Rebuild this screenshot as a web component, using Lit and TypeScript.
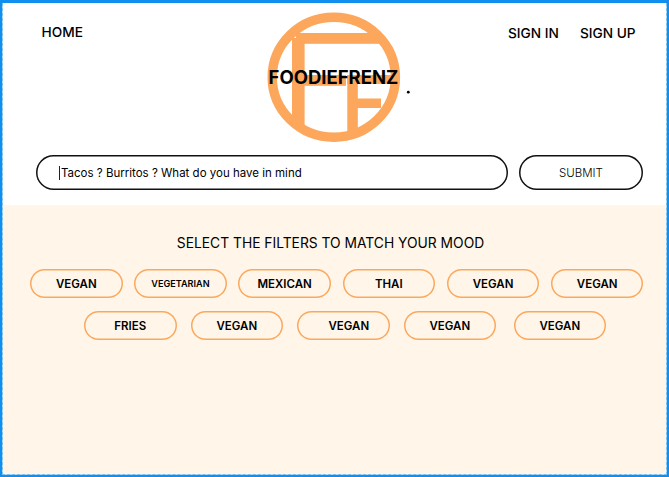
import { LitElement, html, css } from "lit";
import { customElement } from "lit/decorators.js";
import { classMap } from "lit/directives/class-map.js";

interface Filter {
  label: string;
  small?: boolean;
  nudge?: boolean;
}

const FIRST_ROW: Filter[] = [
  { label: "VEGAN" },
  { label: "VEGETARIAN", small: true },
  { label: "MEXICAN" },
  { label: "THAI" },
  { label: "VEGAN" },
  { label: "VEGAN" },
];

const SECOND_ROW: Filter[] = [
  { label: "FRIES" },
  { label: "VEGAN" },
  { label: "VEGAN", nudge: true },
  { label: "VEGAN" },
  { label: "VEGAN" },
];

@customElement("brand-logo")
export class BrandLogo extends LitElement {
  static styles = css`
    :host {
      display: grid;
      width: 160px;
      height: 140px;
      place-items: center;
    }
    .mark,
    .name {
      grid-area: 1 / 1;
    }
    .mark {
      display: block;
    }
    .name {
      font-size: 18.5px;
      font-weight: 700;
      line-height: 22px;
      white-space: nowrap;
      margin: 1px 1px 0 0;
      z-index: 1;
    }
  `;

  render() {
    return html`
      <svg class="mark" width="160" height="140" viewBox="254 6 160 140">
        <g fill="#fca75b">
          <rect x="296" y="33" width="84" height="10.8" />
          <rect x="292" y="38" width="12.6" height="87" />
          <rect x="304" y="75" width="42" height="10.8" />
          <rect x="347.3" y="75" width="10.5" height="62" />
          <rect x="347.3" y="75" width="46" height="9" />
          <rect x="357" y="98.5" width="24" height="9.5" />
        </g>
        <ellipse cx="333.8" cy="77.3" rx="61.6" ry="60" fill="none" stroke="#fca75b" stroke-width="9.4" />
        <circle cx="408.3" cy="92.2" r="1.4" fill="#000" />
      </svg>
      <span class="name">FOODIEFRENZ</span>
    `;
  }
}

@customElement("app-root")
export class AppRoot extends LitElement {
  static styles = css`
    :host {
      display: block;
      height: 477px;
      font-family: Inter, sans-serif;
      color: #000;
    }
    .page {
      box-sizing: border-box;
      height: 477px;
      border: solid #118fee;
      border-width: 3px 2px 2px;
      background: #fff;
      display: flex;
      flex-direction: column;
      overflow: hidden;
    }
    .inner {
      box-sizing: border-box;
      flex: 1;
      display: flex;
      flex-direction: column;
      border: dashed #7cc1f3;
      border-width: 0 1px 1px;
      background: #b5daf4;
    }
    .top {
      box-sizing: border-box;
      height: 202px;
      background: #fff;
    }
    .header {
      display: grid;
      grid-template-columns: 251px 160px 1fr;
      height: 152px;
      align-items: start;
      font-size: 13.7px;
      font-weight: 500;
      line-height: 20px;
    }
    .home {
      margin: 19px 0 0 38.5px;
    }
    .logo {
      margin-top: 3px;
    }
    .account {
      display: flex;
      gap: 21px;
      margin: 20px 0 0 94px;
      white-space: nowrap;
    }
    .search {
      display: flex;
      gap: 11px;
      padding-left: 33px;
    }
    .field,
    .submit {
      box-sizing: border-box;
      height: 35px;
      box-shadow: inset 0 0 0 1.5px #111;
      border-radius: 17.5px;
      display: flex;
      align-items: center;
      font-size: 11.5px;
    }
    .field {
      width: 472px;
      padding-left: 23px;
    }
    .caret {
      width: 1px;
      height: 14px;
      background: #222;
      margin-right: 1px;
    }
    .submit {
      width: 124px;
      justify-content: center;
      font-weight: 300;
    }
    .filters {
      flex: 1;
      background: #fff6e9;
    }
    .title {
      margin: 0;
      padding-top: 28px;
      width: 655px;
      text-align: center;
      font-size: 13.82px;
      font-weight: 400;
      line-height: 20px;
    }
    .row {
      display: flex;
    }
    .first {
      margin: 16px 0 0 27px;
      gap: 11.7px;
    }
    .second {
      margin: 13px 0 0 81px;
      gap: 14px;
    }
    .second .chip:last-child {
      margin-left: 3.5px;
    }
    .chip {
      box-sizing: border-box;
      width: 92.5px;
      height: 29px;
      box-shadow: inset 0 0 0 1.5px #fba85f;
      border-radius: 14.5px;
      display: flex;
      align-items: center;
      justify-content: center;
      font-size: 11.5px;
      font-weight: 600;
    }
    .small {
      font-size: 9.1px;
    }
    .nudge {
      padding-left: 11px;
    }
  `;

  private row(filters: Filter[], name: string) {
    return html`<div class="row ${name}">
      ${filters.map(
        (f) => html`<div class=${classMap({ chip: true, small: !!f.small, nudge: !!f.nudge })}>${f.label}</div>`
      )}
    </div>`;
  }

  render() {
    return html`
      <div class="page">
        <div class="inner">
          <div class="top">
            <div class="header">
              <span class="home">HOME</span>
              <brand-logo class="logo"></brand-logo>
              <div class="account"><span>SIGN IN</span><span>SIGN UP</span></div>
            </div>
            <div class="search">
              <div class="field"><span class="caret"></span><span>Tacos ? Burritos ? What do you have in mind</span></div>
              <div class="submit">SUBMIT</div>
            </div>
          </div>
          <div class="filters">
            <h2 class="title">SELECT THE FILTERS TO MATCH YOUR MOOD</h2>
            ${this.row(FIRST_ROW, "first")} ${this.row(SECOND_ROW, "second")}
          </div>
        </div>
      </div>
    `;
  }
}
